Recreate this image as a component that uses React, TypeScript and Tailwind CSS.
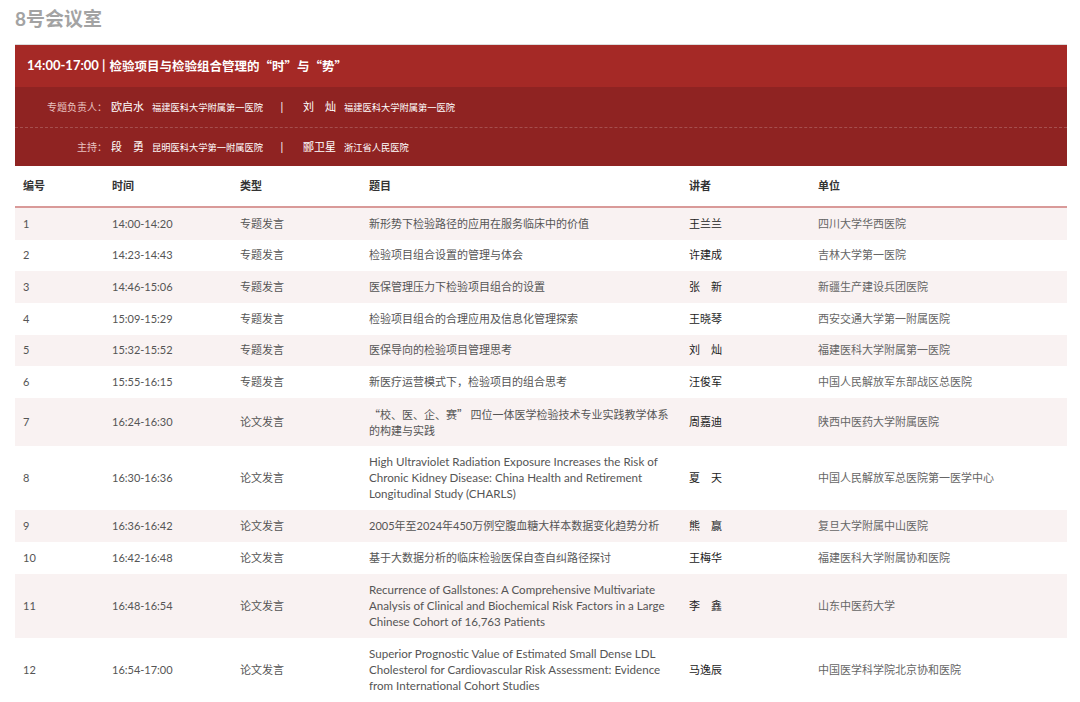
import React from "react";

type Row = {
  no: string;
  time: string;
  type: string;
  title: string[];
  en?: boolean;
  cjk?: boolean;
  speaker: string;
  unit: string;
  pad: string;
};

const A = "py-[7.83px]";
const B = "py-2";

const rows: Row[] = [
  { no: "1", time: "14:00-14:20", type: "专题发言", pad: A, title: ["新形势下检验路径的应用在服务临床中的价值"], speaker: "王兰兰", unit: "四川大学华西医院" },
  { no: "2", time: "14:23-14:43", type: "专题发言", pad: A, title: ["检验项目组合设置的管理与体会"], speaker: "许建成", unit: "吉林大学第一医院" },
  { no: "3", time: "14:46-15:06", type: "专题发言", pad: A, title: ["医保管理压力下检验项目组合的设置"], speaker: "张　新", unit: "新疆生产建设兵团医院" },
  { no: "4", time: "15:09-15:29", type: "专题发言", pad: A, title: ["检验项目组合的合理应用及信息化管理探索"], speaker: "王晓琴", unit: "西安交通大学第一附属医院" },
  { no: "5", time: "15:32-15:52", type: "专题发言", pad: A, title: ["医保导向的检验项目管理思考"], speaker: "刘　灿", unit: "福建医科大学附属第一医院" },
  { no: "6", time: "15:55-16:15", type: "专题发言", pad: A, title: ["新医疗运营模式下，检验项目的组合思考"], speaker: "汪俊军", unit: "中国人民解放军东部战区总医院" },
  { no: "7", time: "16:24-16:30", type: "论文发言", pad: B, cjk: true, title: ["“校、医、企、赛” 四位一体医学检验技术专业实践教学体系", "的构建与实践"], speaker: "周嘉迪", unit: "陕西中医药大学附属医院" },
  { no: "8", time: "16:30-16:36", type: "论文发言", pad: B, en: true, title: ["High Ultraviolet Radiation Exposure Increases the Risk of", "Chronic Kidney Disease: China Health and Retirement", "Longitudinal Study (CHARLS)"], speaker: "夏　天", unit: "中国人民解放军总医院第一医学中心" },
  { no: "9", time: "16:36-16:42", type: "论文发言", pad: B, title: ["2005年至2024年450万例空腹血糖大样本数据变化趋势分析"], speaker: "熊　赢", unit: "复旦大学附属中山医院" },
  { no: "10", time: "16:42-16:48", type: "论文发言", pad: B, title: ["基于大数据分析的临床检验医保自查自纠路径探讨"], speaker: "王梅华", unit: "福建医科大学附属协和医院" },
  { no: "11", time: "16:48-16:54", type: "论文发言", pad: B, en: true, title: ["Recurrence of Gallstones: A Comprehensive Multivariate", "Analysis of Clinical and Biochemical Risk Factors in a Large", "Chinese Cohort of 16,763 Patients"], speaker: "李　鑫", unit: "山东中医药大学" },
  { no: "12", time: "16:54-17:00", type: "论文发言", pad: "py-[8.5px]", en: true, title: ["Superior Prognostic Value of Estimated Small Dense LDL", "Cholesterol for Cardiovascular Risk Assessment: Evidence", "from International Cohort Studies"], speaker: "马逸辰", unit: "中国医学科学院北京协和医院" },
];

function Person({ name, org }: { name: string; org: string }) {
  return (
    <span className="flex items-baseline whitespace-nowrap">
      <span className="text-[11px] text-white">{name}</span>
      <span className="ml-[8px] text-[9.25px] text-white">{org}</span>
    </span>
  );
}

function PeopleRow({ label, a, b }: { label: string; a: [string, string]; b: [string, string] }) {
  return (
    <div className="flex h-full items-center">
      <div className="w-[92px] text-right text-[10px] text-[#e9c2c0] whitespace-nowrap">{label}</div>
      <div className="ml-[4px] w-[160px]">
        <Person name={a[0]} org={a[1]} />
      </div>
      <div className="w-[22px] text-center text-[11px] text-white">|</div>
      <div className="ml-[10px]">
        <Person name={b[0]} org={b[1]} />
      </div>
    </div>
  );
}

const cjkFont = { fontFamily: "'Noto Sans CJK SC', sans-serif" };

export default function App() {
  return (
    <div
      className="w-[1080px] h-[702px] overflow-hidden bg-white"
      style={{ fontFamily: "Lato, 'Noto Sans CJK SC', sans-serif" }}
    >
      <div className="h-[44px] pl-[15px] pt-[5px] text-[19px] leading-[28px] font-bold text-[#a3a3a3]">
        8号会议室
      </div>
      <div className="ml-[15px] w-[1052px]">
        <div className="border-t border-[#dcdcdc] bg-[#a52926] h-[43px] flex items-center pl-[12px] text-white font-bold whitespace-nowrap">
          <span className="text-[13px]">14:00-17:00 |</span>
          <span className="ml-[4px] text-[12.5px]" style={cjkFont}>检验项目与检验组合管理的“时”与“势”</span>
        </div>
        <div className="bg-[#8f2322]">
          <div className="h-[40px]">
            <PeopleRow label="专题负责人：" a={["欧启水", "福建医科大学附属第一医院"]} b={["刘　灿", "福建医科大学附属第一医院"]} />
          </div>
          <div className="h-[39px] border-t border-dashed border-white/20">
            <PeopleRow label="主持：" a={["段　勇", "昆明医科大学第一附属医院"]} b={["郦卫星", "浙江省人民医院"]} />
          </div>
        </div>
        <table className="w-[1052px] table-fixed border-collapse text-[11px] leading-[16px]">
          <colgroup>
            <col className="w-[89px]" />
            <col className="w-[128px]" />
            <col className="w-[129px]" />
            <col className="w-[320px]" />
            <col className="w-[129px]" />
            <col className="w-[257px]" />
          </colgroup>
          <thead>
            <tr className="h-[41px] border-b-2 border-[#d99a99] text-left text-[#333] font-semibold">
              <th className="px-2 font-semibold">编号</th>
              <th className="px-2 font-semibold">时间</th>
              <th className="px-2 font-semibold">类型</th>
              <th className="px-2 font-semibold">题目</th>
              <th className="px-2 font-semibold">讲者</th>
              <th className="px-2 font-semibold">单位</th>
            </tr>
          </thead>
          <tbody>
            {rows.map((r, i) => (
              <tr key={r.no} className={i % 2 === 0 ? "bg-[#f9f2f2]" : "bg-white"}>
                <td className={`px-2 ${r.pad} text-[#555]`}>{r.no}</td>
                <td className={`px-2 ${r.pad} text-[#555]`}>{r.time}</td>
                <td className={`px-2 ${r.pad} text-[#555]`}>{r.type}</td>
                <td className={`px-2 ${r.pad} text-[#555]`} style={r.cjk ? cjkFont : undefined}>
                  {r.title.map((t, j) => (
                    <div key={j} className={r.en ? "whitespace-nowrap text-[11.6px]" : "whitespace-nowrap"}>{t}</div>
                  ))}
                </td>
                <td className={`px-2 ${r.pad} text-[#222] whitespace-pre`}>{r.speaker}</td>
                <td className={`px-2 ${r.pad} text-[#666]`}>{r.unit}</td>
              </tr>
            ))}
          </tbody>
        </table>
      </div>
    </div>
  );
}
